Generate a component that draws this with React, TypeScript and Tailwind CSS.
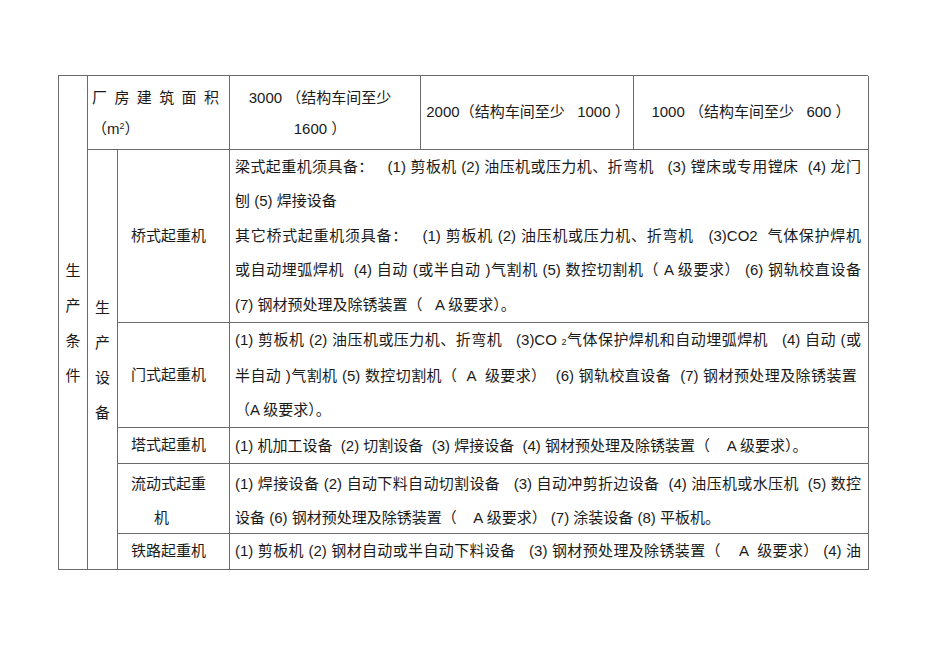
const font = "font-['Liberation_Sans','Noto_Sans_CJK_SC',sans-serif]";

// justified single line: stretched to the cell's right edge
const Full = ({ children }: { children: React.ReactNode }) => (
  <div className="whitespace-pre text-justify [text-align-last:justify]">{children}</div>
);

const Line = ({ children }: { children: React.ReactNode }) => (
  <div className="whitespace-pre">{children}</div>
);

const cell = "border-r border-b border-[#6b6b6b]";

const Sub2 = () => <span className="text-[9px]">2</span>;

export default function App() {
  return (
    <div className={`min-h-screen bg-white pt-[75px] pl-[58px] text-[15px] text-[#1a1a1a] ${font}`}>
      <div className="grid w-[810px] grid-cols-[29px_30px_112px_191px_213px_235px] grid-rows-[74px_173px_105px_36px_70px_36px] border-l border-t border-[#6b6b6b]">
        {/* 生产条件 */}
        <div className={`${cell} row-span-6 flex flex-col items-center justify-center leading-[35px]`}>
          <div>生</div>
          <div>产</div>
          <div>条</div>
          <div>件</div>
        </div>

        {/* top row */}
        <div className={`${cell} col-span-2 flex flex-col justify-center pl-[4px] pr-[10px] leading-[31px]`}>
          <Full>厂 房 建 筑 面 积</Full>
          <Line>
            （m<sup className="text-[9px]">2</sup>）
          </Line>
        </div>
        <div className={`${cell} flex flex-col items-center justify-center pr-[10px] leading-[31px]`}>
          <Line>3000 （结构车间至少</Line>
          <Line>1600 ）</Line>
        </div>
        <div className={`${cell} flex items-center justify-center pl-[2px]`}>
          <Line>2000（结构车间至少   1000 ）</Line>
        </div>
        <div className={`${cell} flex items-center justify-center`}>
          <Line>1000 （结构车间至少   600 ）</Line>
        </div>

        {/* 生产设备 */}
        <div className={`${cell} row-span-5 flex flex-col items-center justify-center leading-[35px]`}>
          <div>生</div>
          <div>产</div>
          <div>设</div>
          <div>备</div>
        </div>

        {/* 桥式起重机 */}
        <div className={`${cell} flex items-center pl-[13px]`}>桥式起重机</div>
        <div className={`${cell} col-span-3 flex flex-col justify-center pl-[5px] pr-[7px] leading-[34.5px]`}>
          <Full>梁式起重机须具备：   (1) 剪板机 (2) 油压机或压力机、折弯机   (3) 镗床或专用镗床  (4) 龙门</Full>
          <Line>刨 (5) 焊接设备</Line>
          <Full>其它桥式起重机须具备：   (1) 剪板机 (2) 油压机或压力机、折弯机   (3)CO2  气体保护焊机</Full>
          <Full>或自动埋弧焊机  (4) 自动 (或半自动 )气割机 (5) 数控切割机（ A 级要求） (6) 钢轨校直设备</Full>
          <Line>(7) 钢材预处理及除锈装置（   A 级要求）。</Line>
        </div>

        {/* 门式起重机 */}
        <div className={`${cell} flex items-center pl-[13px]`}>门式起重机</div>
        <div className={`${cell} col-span-3 flex flex-col justify-center pl-[5px] pr-[7px] leading-[34px]`}>
          <Full>
            (1) 剪板机 (2) 油压机或压力机、折弯机   (3)CO <Sub2 />气体保护焊机和自动埋弧焊机   (4) 自动 (或
          </Full>
          <Full>半自动 )气割机 (5) 数控切割机（  A  级要求）  (6) 钢轨校直设备  (7) 钢材预处理及除锈装置 </Full>
          <Line>（A 级要求）。</Line>
        </div>

        {/* 塔式起重机 */}
        <div className={`${cell} flex items-center pl-[13px]`}>塔式起重机</div>
        <div className={`${cell} col-span-3 flex items-center pl-[5px] pt-[2px]`}>
          <Line>(1) 机加工设备  (2) 切割设备  (3) 焊接设备  (4) 钢材预处理及除锈装置（    A 级要求）。</Line>
        </div>

        {/* 流动式起重机 */}
        <div className={`${cell} flex flex-col justify-center pt-[5px] leading-[34px]`}>
          <div className="pl-[13px]">流动式起重</div>
          <div className="pl-[36px]">机</div>
        </div>
        <div className={`${cell} col-span-3 flex flex-col justify-center pl-[5px] pr-[7px] pt-[5px] leading-[34px]`}>
          <Full>(1) 焊接设备 (2) 自动下料自动切割设备   (3) 自动冲剪折边设备  (4) 油压机或水压机  (5) 数控</Full>
          <Line>设备 (6) 钢材预处理及除锈装置（    A 级要求） (7) 涂装设备 (8) 平板机。</Line>
        </div>

        {/* 铁路起重机 */}
        <div className={`${cell} flex items-center pl-[13px]`}>铁路起重机</div>
        <div className={`${cell} col-span-3 flex items-center pl-[5px] pr-[7px]`}>
          <div className="w-full">
            <Full>(1) 剪板机 (2) 钢材自动或半自动下料设备   (3) 钢材预处理及除锈装置（    A  级要求） (4) 油</Full>
          </div>
        </div>
      </div>
    </div>
  );
}
